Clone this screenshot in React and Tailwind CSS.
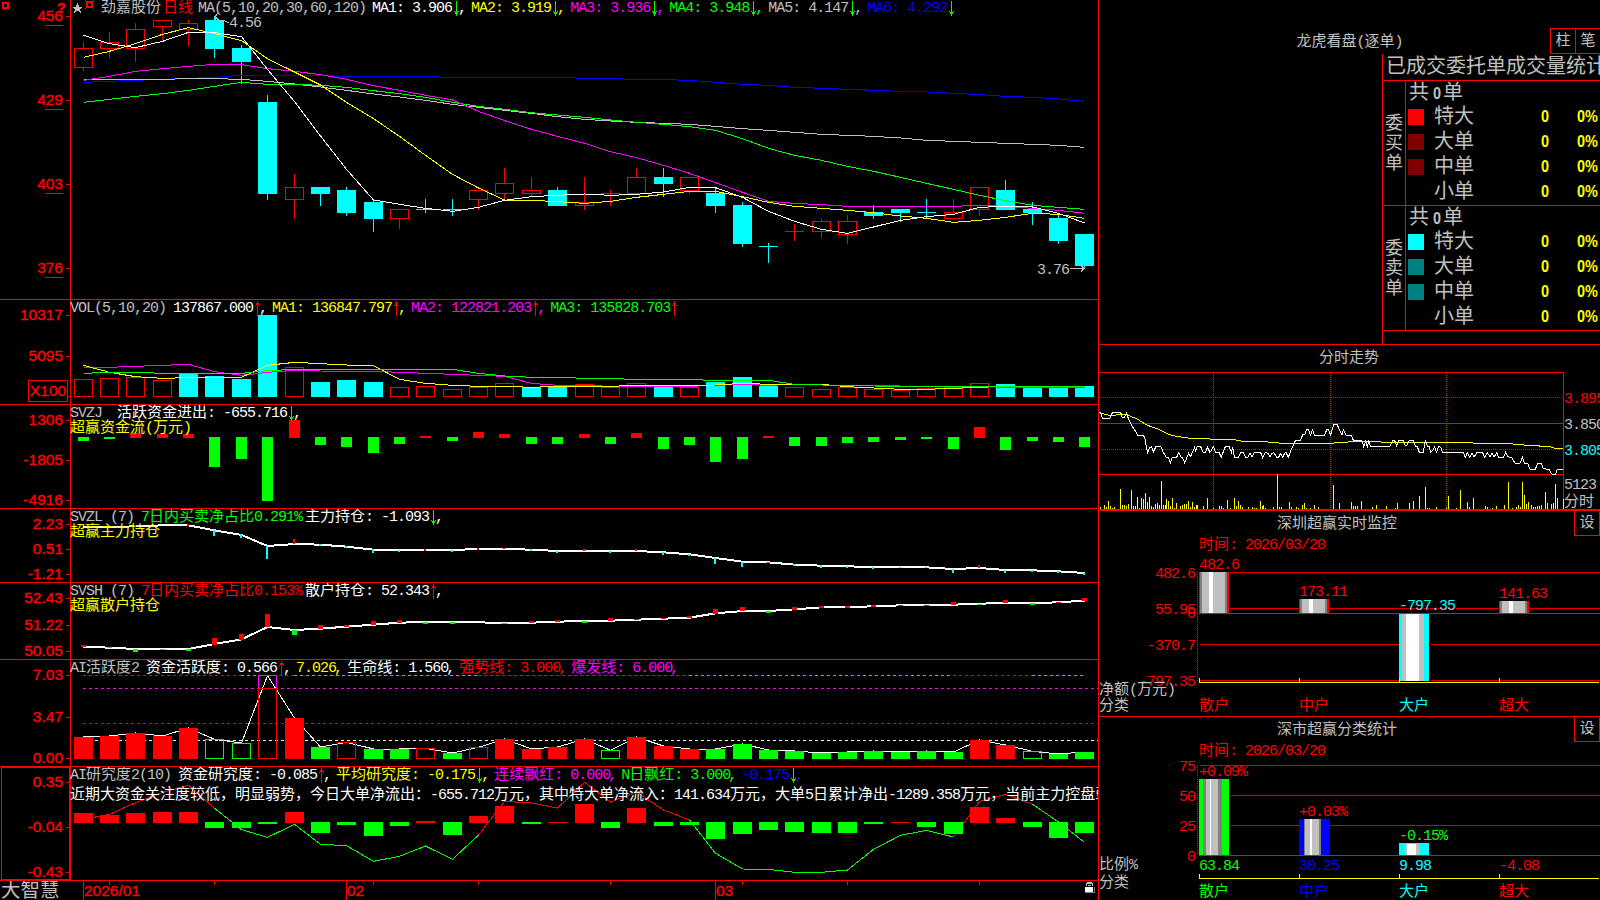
import React from 'react';

const RED = '#ff0000';
const GREEN = '#00ff00';
const CYAN = '#00ffff';
const YELLOW = '#ffff00';
const MAGENTA = '#ff00ff';
const BLUE = '#0000ff';
const WHITE = '#ffffff';
const GRAY = '#c0c0c0';
const DARK = '#808080';

const COUNT = 39;

// Centre pixel column of the bar with the given index
const barX = (i) => 83 + Math.floor(i * 26.36 + 0.19);

// Series are stored in thirds of a pixel below the panel's base
const px = (base, v) => base + Math.round(v / 3);

// [color, wick top, body top, body bottom, wick bottom]
const candles = [
  ['r', 42, 48, 67, 71], ['r', 32, 42, 48, 58], ['r', 23, 29, 48, 62], ['r', 20, 20, 26, 40],
  ['r', 20, 23, 29, 46], ['c', 16, 20, 49, 58], ['c', 45, 48, 62, 84], ['c', 95, 102, 194, 200],
  ['r', 174, 187, 199, 219], ['c', 187, 187, 194, 206], ['c', 187, 190, 213, 216], ['c', 200, 202, 219, 232],
  ['r', 209, 209, 218, 229], ['c', 199, 209, 209, 213], ['c', 199, 209, 209, 216], ['r', 190, 190, 199, 210],
  ['r', 168, 183, 193, 200], ['r', 177, 190, 193, 196], ['c', 187, 190, 206, 206], ['r', 177, 202, 205, 210],
  ['r', 190, 193, 193, 206], ['r', 168, 177, 193, 193], ['c', 168, 177, 184, 197], ['r', 177, 177, 190, 194],
  ['c', 187, 193, 206, 213], ['c', 202, 205, 244, 247], ['c', 243, 246, 246, 263], ['r', 224, 231, 231, 241],
  ['r', 218, 221, 231, 238], ['r', 215, 221, 234, 244], ['c', 205, 212, 216, 219], ['c', 209, 209, 213, 222],
  ['c', 199, 212, 212, 218], ['r', 199, 212, 218, 218], ['r', 187, 187, 209, 216], ['c', 180, 190, 210, 210],
  ['c', 202, 209, 213, 225], ['c', 215, 218, 241, 244], ['c', 234, 234, 266, 268],
];

const priceAverages = [
  { color: BLUE, data: [247, 244, 241, 238, 235, 232, 226, 226, 226, 227, 229, 229, 229, 230, 232, 232, 232, 232, 232, 235, 236, 238, 239, 241, 247, 253, 256, 262, 265, 268, 271, 274, 276, 280, 284, 289, 292, 297, 304] },
  { color: GRAY, data: [238, 238, 238, 238, 236, 236, 238, 244, 252, 261, 271, 282, 291, 301, 313, 322, 331, 340, 350, 358, 363, 367, 370, 373, 379, 386, 391, 397, 403, 406, 409, 414, 421, 424, 427, 430, 433, 436, 442] },
  { color: GREEN, data: [307, 298, 289, 281, 271, 259, 247, 253, 253, 256, 262, 272, 281, 292, 307, 319, 328, 338, 345, 352, 360, 367, 373, 380, 391, 416, 445, 466, 481, 499, 514, 532, 550, 568, 586, 602, 616, 622, 628] },
  { color: MAGENTA, data: [241, 229, 214, 206, 199, 193, 194, 206, 214, 224, 238, 257, 271, 286, 300, 334, 362, 388, 409, 430, 455, 473, 496, 520, 548, 577, 604, 610, 614, 619, 619, 619, 619, 619, 616, 619, 625, 631, 640] },
  { color: YELLOW, data: [172, 154, 131, 103, 83, 101, 122, 176, 216, 255, 307, 356, 409, 466, 523, 564, 600, 601, 605, 610, 604, 592, 583, 574, 574, 590, 607, 619, 625, 631, 638, 648, 655, 667, 661, 652, 640, 643, 655] },
  { color: WHITE, data: [106, 131, 143, 124, 97, 98, 110, 208, 305, 408, 508, 600, 613, 625, 634, 622, 601, 590, 586, 582, 586, 583, 576, 562, 563, 592, 634, 664, 688, 700, 681, 661, 650, 643, 622, 619, 621, 640, 669] },
];

const volumes = [268, 265, 262, 271, 250, 258, 267, 75, 232, 276, 270, 276, 292, 289, 298, 291, 280, 292, 290, 283, 291, 280, 289, 291, 276, 261, 288, 292, 298, 291, 298, 301, 295, 291, 280, 282, 292, 292, 288];
const volumeKinds = 'rrrrccccrcccrrrrrccrrrcrcccrrrrrrrrcccc';

const volumeAverages = [
  { color: MAGENTA, data: [232, 232, 229, 226, 223, 245, 256, 247, 241, 243, 244, 244, 247, 250, 253, 256, 259, 280, 286, 286, 289, 289, 289, 289, 286, 283, 286, 283, 285, 286, 286, 288, 289, 289, 289, 292, 292, 292, 292] },
  { color: YELLOW, data: [226, 247, 260, 265, 263, 262, 262, 226, 217, 221, 225, 227, 268, 280, 286, 289, 289, 292, 289, 289, 289, 286, 286, 286, 285, 280, 283, 283, 283, 290, 294, 298, 298, 295, 292, 289, 289, 289, 289] },
  { color: GREEN, data: [250, 247, 247, 250, 250, 250, 250, 242, 238, 238, 238, 238, 238, 238, 238, 250, 258, 262, 262, 265, 266, 268, 268, 269, 271, 271, 271, 283, 285, 286, 288, 289, 289, 289, 289, 289, 289, 289, 289] },
];

const flowBars = [453, 447, 429, 432, 432, 531, 507, 633, 390, 465, 471, 489, 462, 438, 453, 426, 432, 462, 462, 432, 462, 429, 477, 465, 516, 507, 438, 468, 468, 459, 456, 450, 447, 477, 411, 480, 453, 456, 471];

const mainHolding = [710, 711, 709, 706, 706, 721, 735, 768, 762, 764, 770, 779, 780, 780, 779, 778, 777, 779, 783, 783, 783, 783, 787, 793, 804, 815, 817, 824, 827, 829, 831, 831, 832, 837, 834, 840, 841, 844, 849];
const mainTicks = [
  [2, 'r', 706, 712], [4, 'r', 703, 709], [5, 'c', 720, 738], [6, 'c', 732, 744], [7, 'c', 768, 807], [8, 'r', 747, 762],
  [9, 'c', 761, 767], [10, 'c', 767, 773], [11, 'c', 777, 789], [12, 'c', 780, 786], [13, 'r', 777, 783], [14, 'c', 780, 786],
  [15, 'r', 774, 780], [16, 'r', 773, 777], [17, 'c', 777, 783], [18, 'c', 783, 789], [19, 'r', 777, 783], [20, 'c', 783, 789],
  [21, 'r', 777, 783], [22, 'c', 786, 795], [23, 'c', 791, 797], [24, 'c', 804, 822], [25, 'c', 816, 831], [26, 'r', 816, 819],
  [27, 'c', 822, 828], [28, 'c', 825, 834], [29, 'c', 828, 834], [30, 'c', 831, 837], [31, 'c', 831, 834], [32, 'c', 831, 834],
  [33, 'c', 837, 849], [34, 'r', 825, 834], [35, 'c', 840, 849], [36, 'c', 840, 846], [37, 'c', 843, 849], [38, 'c', 849, 855],
];

const retailHolding = [200, 203, 207, 208, 207, 192, 178, 141, 150, 146, 140, 134, 128, 126, 126, 127, 129, 128, 125, 123, 122, 119, 116, 113, 100, 93, 93, 88, 82, 81, 79, 76, 75, 74, 71, 69, 69, 67, 62];
const retailTicks = [
  [0, 'r', 195, 201], [1, 'g', 201, 204], [2, 'g', 207, 216], [3, 'g', 207, 210], [4, 'g', 207, 213], [5, 'r', 174, 195],
  [6, 'r', 162, 180], [7, 'r', 102, 141], [8, 'g', 150, 165], [9, 'r', 135, 147], [10, 'r', 135, 141], [11, 'r', 123, 135],
  [12, 'r', 120, 129], [13, 'g', 126, 132], [14, 'g', 126, 132], [16, 'g', 129, 132], [17, 'r', 123, 129], [18, 'r', 120, 126],
  [19, 'g', 123, 129], [20, 'r', 114, 123], [21, 'r', 117, 120], [22, 'r', 114, 117], [23, 'r', 108, 114], [24, 'r', 87, 102],
  [25, 'r', 81, 93], [26, 'g', 93, 99], [27, 'r', 81, 90], [28, 'r', 78, 84], [29, 'r', 78, 84], [30, 'r', 75, 81],
  [31, 'r', 75, 78], [32, 'r', 75, 78], [33, 'r', 66, 75], [34, 'g', 72, 75], [35, 'r', 60, 69], [36, 'g', 69, 75],
  [37, 'r', 66, 69], [38, 'r', 54, 63],
];

const activity = [471, 468, 459, 468, 444, 478, 489, 287, 414, 501, 487, 507, 507, 505, 519, 502, 477, 507, 501, 477, 511, 471, 498, 507, 507, 492, 510, 513, 519, 516, 513, 516, 513, 516, 480, 495, 514, 522, 516];
// Upper case is filled, lower case is hollow
const activityKinds = 'RRRRRggrRGrGGrGrRRRRgRRRGGGGGGGGGGRRgGG';

const researchBars = [699, 705, 699, 696, 696, 744, 744, 732, 696, 759, 735, 768, 738, 723, 765, 708, 678, 732, 726, 672, 744, 684, 738, 735, 777, 762, 750, 756, 759, 759, 732, 726, 741, 762, 681, 714, 741, 774, 759];
const researchLine = [718, 703, 668, 637, 616, 685, 749, 772, 733, 793, 797, 844, 829, 798, 838, 765, 664, 669, 684, 607, 666, 636, 690, 720, 820, 867, 868, 877, 877, 870, 808, 766, 751, 771, 664, 643, 673, 726, 787];

const intraday = '27,217 32,217 37,235 60,235 66,220 70,217 92,217 97,233 103,233 109,219 115,235 125,257 135,271 143,286 161,287 166,300 169,322 173,337 179,322 185,320 191,337 197,320 213,320 219,335 229,352 236,354 241,369 247,352 260,352 266,338 272,350 278,354 284,369 290,354 296,340 302,350 308,335 314,322 317,335 321,320 332,320 339,337 347,337 353,320 359,337 365,330 370,320 377,337 387,337 394,352 400,335 406,320 418,320 424,337 428,322 433,352 445,352 452,338 460,338 467,352 474,352 480,338 486,352 493,338 512,338 518,354 526,338 534,340 540,352 546,340 552,338 560,352 566,352 572,340 578,352 584,340 588,337 595,352 603,330 609,318 616,302 632,300 638,285 644,285 650,268 656,270 662,286 667,269 674,286 704,286 710,269 716,269 722,286 727,265 732,253 742,254 748,270 756,286 760,270 768,286 784,287 790,301 816,302 821,320 827,302 832,320 836,304 841,319 900,319 908,302 914,302 920,318 926,302 940,302 946,318 950,318 958,302 970,302 976,318 982,320 988,337 1000,337 1006,302 1012,318 1018,320 1022,337 1030,330 1034,320 1039,337 1046,320 1052,322 1058,337 1120,338 1126,352 1132,338 1139,352 1146,340 1152,352 1160,338 1178,338 1184,352 1192,338 1200,350 1206,338 1212,352 1220,338 1226,352 1240,352 1247,337 1254,350 1266,354 1275,370 1290,370 1297,352 1303,370 1314,372 1320,388 1336,388 1343,370 1354,370 1360,386 1378,388 1385,402 1396,403 1402,388 1420,388';
const intradayAverage = '27,217 45,223 65,227 90,223 110,223 125,231 140,236 165,252 185,261 205,267 235,283 260,289 300,295 350,296 370,298 430,298 450,303 525,305 560,309 720,310 760,307 800,304 855,304 880,307 1130,307 1160,310 1250,310 1300,315 1380,320 1395,325 1420,325';
const intradayVolume = [
  [31, 501], [43, 495], [49, 501], [55, 483], [61, 498], [67, 504], [73, 500], [91, 447], [97, 495], [103, 495], [109, 498],
  [115, 492], [124, 450], [130, 498], [136, 498], [142, 471], [148, 504], [154, 474], [160, 477], [166, 459], [172, 486],
  [178, 471], [184, 498], [190, 501], [196, 492], [202, 489], [208, 495], [214, 423], [220, 495], [226, 495], [229, 477],
  [235, 483], [241, 498], [247, 474], [253, 504], [259, 489], [271, 498], [277, 495], [283, 492], [289, 492], [295, 483],
  [301, 500], [307, 486], [313, 500], [319, 495], [322, 495], [340, 498], [352, 474], [370, 504], [388, 498], [394, 498],
  [400, 504], [412, 480], [421, 504], [433, 474], [439, 498], [445, 483], [451, 495], [457, 501], [475, 501], [487, 501],
  [493, 504], [499, 504], [511, 483], [517, 498], [520, 495], [526, 504], [550, 501], [562, 402], [568, 501], [574, 501],
  [598, 486], [604, 501], [619, 501], [625, 504], [637, 495], [643, 489], [649, 504], [661, 504], [673, 495], [685, 501],
  [730, 435], [748, 489], [784, 486], [790, 498], [796, 498], [802, 498], [814, 483], [847, 501], [859, 495], [889, 498],
  [916, 504], [922, 489], [958, 489], [970, 483], [988, 468], [1006, 441], [1012, 504], [1018, 504], [1039, 501], [1069, 504],
  [1075, 468], [1099, 504], [1111, 450], [1132, 486], [1138, 500], [1150, 474], [1186, 498], [1192, 500], [1207, 504],
  [1219, 498], [1243, 495], [1255, 426], [1267, 504], [1279, 501], [1285, 495], [1291, 501], [1297, 426], [1303, 465],
  [1309, 492], [1315, 486], [1324, 495], [1330, 501], [1336, 501], [1342, 498], [1348, 498], [1354, 495], [1366, 456],
  [1372, 489], [1384, 492], [1390, 489], [1396, 432], [1402, 474], [1420, 477],
];

const kindColor = { r: RED, c: CYAN, g: GREEN };

// Chinese glyphs are 15px wide and latin ones 8px, so the latin runs are tightened
const Mixed = ({ text, tag: Tag = 'span' }) =>
  text.split(/([\u2e80-\uffef]+)/).filter(Boolean).map((part, i) => (
    <Tag key={i} className={/[\u2e80-\uffef]/.test(part) ? 'tracking-normal' : 'tracking-[-1px]'}>
      {part}
    </Tag>
  ));

const Label = ({ x, y, color = RED, anchor = 'start', children }) => (
  <text x={x} y={y + 5} fill={color} textAnchor={anchor} className="text-[15px] whitespace-pre">
    <Mixed text={children} tag="tspan" />
  </text>
);

const HLine = ({ x1, x2, y, color = RED, dash }) => (
  <line x1={x1} x2={x2} y1={y + 0.5} y2={y + 0.5} stroke={color} strokeDasharray={dash} />
);

const VLine = ({ x, y1, y2, color = RED, dash }) => (
  <line x1={x + 0.5} x2={x + 0.5} y1={y1} y2={y2} stroke={color} strokeDasharray={dash} />
);

const Series = ({ data, base, color, from = 0, to = COUNT - 1, width = 1 }) => (
  <polyline
    fill="none"
    stroke={color}
    strokeWidth={width}
    points={data
      .slice(from, to + 1)
      .map((v, i) => `${barX(from + i) + 0.5},${base + v / 3}`)
      .join(' ')}
  />
);

const Bar = ({ i, top, bottom, color, hollow, width = 19 }) => {
  const x = barX(i) - (width - 1) / 2;
  if (hollow) {
    return (
      <rect x={x + 0.5} y={top + 0.5} width={width - 1} height={Math.max(bottom - top - 1, 1)} fill="none" stroke={color} />
    );
  }
  return <rect x={x} y={top} width={width} height={Math.max(bottom - top, 1)} fill={color} />;
};

const Arrow = ({ up }) => (
  <svg width="8" height="15" viewBox="0 0 8 15" shapeRendering="crispEdges" className="-mt-px shrink-0">
    {up ? (
      <path d="M4 0h1v15H4zM3 2h3v2H3zM2 4h1v1H2zM6 4h1v1H6z" fill={RED} />
    ) : (
      <path d="M4 0h1v15H4zM3 11h3v2H3zM2 10h1v1H2zM6 10h1v1H6z" fill={GREEN} />
    )}
  </svg>
);

// One reading of an indicator header: text, trend arrow, comma
const Reading = ({ color, text, arrow, comma = true }) => (
  <span className="flex items-center whitespace-pre" style={{ color }}>
    <span><Mixed text={text} /></span>
    {arrow && <Arrow up={arrow === 'up'} />}
    {comma && <span className="-ml-[2px] mr-[2px] tracking-[-1px]">,</span>}
  </span>
);

const Header = ({ title, subtitle, children }) => (
  <div className="absolute left-[70px] top-px text-[15px] leading-[16px] whitespace-nowrap">
    <div className="flex h-4 items-center">
      <span className="whitespace-pre text-[#c0c0c0]"><Mixed text={title} /></span>
      <div className="flex gap-[3px] pl-[7px]">{children}</div>
    </div>
    {subtitle && <div className="-mt-px text-[#ffff00]"><Mixed text={subtitle} /></div>}
  </div>
);

const Axis = ({ marks, underline }) => (
  <g>
    {marks.map(([text, y]) => (
      <g key={text}>
        <text x="63" y={y + 5} fill={RED} stroke={RED} strokeWidth="0.4" textAnchor="end" className="font-[Liberation_Sans] text-[15.5px]">
          {text}
        </text>
        <HLine x1={66} x2={70} y={y} />
        {underline && <HLine x1={45} x2={63} y={y + 9} />}
      </g>
    ))}
  </g>
);

const Panel = ({ top, height, marks, underline, header, children }) => (
  <section className="relative w-[1098px] shrink-0 overflow-hidden">
    <svg width="1098" height={height} viewBox={`0 ${top} 1098 ${height}`} shapeRendering="crispEdges" className="block">
      <VLine x={70} y1={top} y2={top + height} />
      <Axis marks={marks} underline={underline} />
      {children}
      <HLine x1={0} x2={1098} y={top + height - 1} />
    </svg>
    {header}
  </section>
);

const Gear = ({ x, y }) => (
  <g transform={`translate(${x} ${y})`} fill={RED}>
    <path d="M1 1h7v7H1zM3 3v3h3V3z" fillRule="evenodd" />
    <path d="M0 0h1v1H0zM8 0h1v1H8zM0 8h1v1H0zM8 8h1v1H8z" />
  </g>
);

const PricePanel = () => (
  <Panel
    top={0}
    height={300}
    underline
    marks={[['456', 16], ['429', 100], ['403', 184], ['376', 268]]}
    header={
      <div className="absolute left-[101px] top-px flex h-4 items-center text-[15px] leading-[16px] whitespace-nowrap">
        <span className="text-[#c0c0c0]">劲嘉股份</span>
        <span className="pl-[2px] text-[#ff0000]">日线</span>
        <span className="pl-[5px] text-[#c0c0c0]"><Mixed text="MA(5,10,20,30,60,120)" /></span>
        <div className="flex gap-[3px] pl-[6px]">
          <Reading color={WHITE} text="MA1: 3.906" arrow="down" />
          <Reading color={YELLOW} text="MA2: 3.919" arrow="down" />
          <Reading color={MAGENTA} text="MA3: 3.936" arrow="down" />
          <Reading color={GREEN} text="MA4: 3.948" arrow="down" />
          <Reading color={GRAY} text="MA5: 4.147" arrow="down" />
          <Reading color={BLUE} text="MA6: 4.292" arrow="down" comma={false} />
        </div>
      </div>
    }
  >
    <path d="M2 2h7v7H2zM4 4v3h3V4z" fillRule="evenodd" fill={RED} />
    <path d="M9 9h1v1H9zM4 9h1v1H4z" fill={RED} />
    <Gear x={85} y={0} />
    <path d="M77.500 3l1.500 3.500h4l-3 2.500 1 4-3.500-2.300-3.500 2.300 1-4-3-2.500h4z" fill={GRAY} />
    <text x="57" y="13" fill={RED} stroke={RED} strokeWidth="0.6" className="font-[Liberation_Sans] text-[14px] font-bold">?</text>
    {candles.map(([kind, high, top, bottom, low], i) => {
      const color = kindColor[kind];
      return (
        <g key={i}>
          <VLine x={barX(i)} y1={high} y2={top} color={color} />
          <VLine x={barX(i)} y1={bottom} y2={low} color={color} />
          {top === bottom ? (
            <HLine x1={barX(i) - 9} x2={barX(i) + 10} y={top} color={color} />
          ) : (
            <Bar i={i} top={top} bottom={kind === 'r' ? bottom + 1 : bottom} color={color} hollow={kind === 'r'} />
          )}
        </g>
      );
    })}
    {priceAverages.map(({ color, data }) => (
      <Series key={color} data={data} base={0} color={color} />
    ))}
    <path d="M215 17l4 3 6 1 4 2M215 17l3-4M215 17l1 3" fill="none" stroke={GRAY} />
    <Label x={229} y={22} color={GRAY}>4.56</Label>
    <Label x={1037} y={269} color={GRAY}>3.76</Label>
    <path d="M1070 268.500h14M1081 265.500l3 3-3 3" fill="none" stroke={GRAY} />
  </Panel>
);

const VolumePanel = () => (
  <Panel
    top={300}
    height={105}
    marks={[['10317', 315], ['5095', 356]]}
    header={
      <Header title="VOL(5,10,20)">
        <Reading color={WHITE} text="137867.000" arrow="up" />
        <Reading color={YELLOW} text="MA1: 136847.797" arrow="up" />
        <Reading color={MAGENTA} text="MA2: 122821.203" arrow="up" />
        <Reading color={GREEN} text="MA3: 135828.703" arrow="up" comma={false} />
      </Header>
    }
  >
    <rect x="28.500" y="380.500" width="39" height="21" fill="none" stroke={RED} />
    <text x="30" y="396" fill={RED} stroke={RED} strokeWidth="0.4" className="font-[Liberation_Sans] text-[15.5px]">X100</text>
    <HLine x1={67} x2={70} y={396} />
    {volumes.map((v, i) => (
      <Bar key={i} i={i} top={px(290, v - 1)} bottom={397} color={kindColor[volumeKinds[i]]} hollow={volumeKinds[i] === 'r'} />
    ))}
    {volumeAverages.map(({ color, data }) => (
      <Series key={color} data={data} base={290} color={color} />
    ))}
  </Panel>
);

const FlowPanel = () => (
  <Panel
    top={405}
    height={104}
    marks={[['1306', 420], ['-1805', 460], ['-4916', 500]]}
    header={
      <Header title="SVZJ " subtitle="超赢资金流(万元)">
        <Reading color={WHITE} text="活跃资金进出: -655.716" arrow="down" />
      </Header>
    }
  >
    {flowBars.map((v, i) => (
      v < 441
        ? <Bar key={i} i={i} top={px(290, v)} bottom={438} color={RED} width={11} />
        : <Bar key={i} i={i} top={437} bottom={px(290, v)} color={GREEN} width={11} />
    ))}
  </Panel>
);

const MainHoldingPanel = () => (
  <Panel
    top={509}
    height={74}
    marks={[['2.23', 524], ['0.51', 549], ['-1.21', 574]]}
    header={
      <Header title="SVZL (7)" subtitle="超赢主力持仓">
        <Reading color={GREEN} text="7日内买卖净占比0.291%" comma={false} />
        <Reading color={WHITE} text="主力持仓: -1.093" arrow="down" />
      </Header>
    }
  >
    <Series data={mainHolding} base={290} color={WHITE} width={2} />
    {mainTicks.map(([i, kind, y1, y2]) => (
      <rect key={i} x={barX(i) - 1} y={px(290, y1)} width="2" height={(y2 - y1) / 3} fill={kindColor[kind]} />
    ))}
  </Panel>
);

const RetailHoldingPanel = () => (
  <Panel
    top={583}
    height={77}
    marks={[['52.43', 598], ['51.22', 625], ['50.05', 651]]}
    header={
      <Header title="SVSH (7)" subtitle="超赢散户持仓">
        <Reading color={RED} text="7日内买卖净占比0.153%" comma={false} />
        <Reading color={WHITE} text="散户持仓: 52.343" arrow="up" />
      </Header>
    }
  >
    <Series data={retailHolding} base={580} color={WHITE} width={2} />
    {retailTicks.map(([i, kind, y1, y2]) => (
      <rect key={i} x={barX(i) - 2} y={px(580, y1)} width="5" height={(y2 - y1) / 3} fill={kindColor[kind]} />
    ))}
  </Panel>
);

const ActivityPanel = () => (
  <Panel
    top={660}
    height={107}
    marks={[['7.03', 675], ['3.47', 717], ['0.00', 758]]}
    header={
      <Header title="AI活跃度2">
        <Reading color={WHITE} text="资金活跃度: 0.566" arrow="up" />
        <Reading color={YELLOW} text="7.026" />
        <Reading color={WHITE} text="生命线: 1.560" />
        <Reading color={RED} text="强势线: 3.000" />
        <Reading color={MAGENTA} text="爆发线: 6.000" />
      </Header>
    }
  >
    {[[0, 6, RED], [6, 7, GREEN], [7, 8, RED], [8, 15, GREEN], [15, 23, RED], [23, 33, GREEN], [33, 36, RED], [36, 38, GREEN]].map(([from, to, color]) => (
      <HLine key={from} x1={barX(from)} x2={barX(to)} y={675} color={color} dash="3 3" />
    ))}
    <HLine x1={83} x2={1098} y={688} color={MAGENTA} dash="3 3" />
    <HLine x1={83} x2={1098} y={723} dash="3 3" />
    <HLine x1={83} x2={1098} y={740} color={WHITE} dash="3 3" />
    <Series data={activity} base={580} color={WHITE} />
    {activity.map((v, i) => {
      const kind = activityKinds[i];
      const color = kindColor[kind.toLowerCase()];
      const top = i === 7 ? 688 : px(580, v - 1);
      return <Bar key={i} i={i} top={top} bottom={759} color={color} hollow={kind === kind.toLowerCase()} />;
    })}
    <path d="M258.500 688V675.500h18V688" fill="none" stroke={MAGENTA} />
  </Panel>
);

const ResearchPanel = () => (
  <Panel
    top={767}
    height={114}
    marks={[['0.35', 782], ['-0.04', 827], ['-0.43', 872]]}
    header={
      <>
        <Header title="AI研究度2(10)">
          <Reading color={WHITE} text="资金研究度: -0.085" arrow="up" />
          <Reading color={YELLOW} text="平均研究度: -0.175" arrow="down" />
          <Reading color={MAGENTA} text="连续飘红: 0.000" />
          <Reading color={GREEN} text="N日飘红: 3.000" />
          <Reading color={BLUE} text="-0.175" arrow="down" />
        </Header>
        <p className="absolute left-[70px] top-[21px] text-[15px] leading-[16px] whitespace-nowrap text-white">
          <Mixed text="近期大资金关注度较低，明显弱势，今日大单净流出：-655.712万元，其中特大单净流入：141.634万元，大单5日累计净出-1289.358万元，当前主力控盘弱" />
        </p>
      </>
    }
  >
    <rect x="1.500" y="767.500" width="68" height="112" fill="none" stroke={RED} />
    {[[0, 5, RED], [5, 15, GREEN], [15, 23, RED], [23, 33, GREEN], [33, 36, RED], [36, 38, GREEN]].map(([from, to, color]) => (
      <Series key={from} data={researchLine} base={580} color={color} from={from} to={to} />
    ))}
    {researchBars.map((v, i) => (
      v <= 726
        ? <Bar key={i} i={i} top={px(580, v)} bottom={823} color={RED} />
        : <Bar key={i} i={i} top={822} bottom={px(580, v)} color={GREEN} />
    ))}
  </Panel>
);

const DateAxis = () => (
  <footer className="relative h-[19px] w-[1098px]">
    <svg width="1098" height="19" viewBox="0 881 1098 19" shapeRendering="crispEdges" className="block">
      {[[0, '2026/01'], [10, '02'], [24, '03']].map(([i, text]) => (
        <g key={text}>
          <VLine x={barX(i)} y1={881} y2={900} />
          <text x={barX(i) + 1} y="896" fill={RED} stroke={RED} strokeWidth="0.4" className="font-[Liberation_Sans] text-[15.5px]">{text}</text>
        </g>
      ))}
      {[1, 5, 11, 15, 20, 25, 29, 34].map((i) => <VLine key={i} x={barX(i)} y1={881} y2={885} />)}
      <text x="1" y="897" fill={GRAY} className="text-[19.5px]">大智慧</text>
      <path d="M1087 882h5v1h1v3h-1v-2h-5v2h-1v-3h1zM1088 885h3v1h-3z" fill={GRAY} />
      <path d="M1085 887h8v5h-8z" fill={WHITE} />
      <path d="M1094 887h1v6h-10v-1h9z" fill={DARK} />
    </svg>
  </footer>
);

const orderGroups = [
  { side: ['委', '买', '单'], rows: [['特大', 'bg-[#ff0000]'], ['大单', 'bg-[#800000]'], ['中单', 'bg-[#800000]'], ['小单', '']] },
  { side: ['委', '卖', '单'], rows: [['特大', 'bg-[#00ffff]'], ['大单', 'bg-[#008080]'], ['中单', 'bg-[#008080]'], ['小单', '']] },
];

const Figure = ({ children }) => (
  <span className="inline-block origin-left scale-x-85 font-[Liberation_Sans] text-[17px] font-bold">{children}</span>
);

const OrderStats = () => (
  <section className="flex h-[345px] flex-col border-b border-[#ff0000]">
    <header className="relative flex h-[54px] shrink-0 justify-center pt-[35px] text-[15px] leading-[16px]">
      <span><Mixed text="龙虎看盘(逐单)" /></span>
      <div className="absolute right-0 top-[28px] flex h-[26px] border-y border-[#ff0000]">
        <span className="w-[25px] border-l border-[#ff0000] text-center leading-[25px]">柱</span>
        <span className="w-[25px] border-l border-[#ff0000] text-center leading-[25px]">笔</span>
      </div>
    </header>
    <div className="ml-[283px] flex-1 overflow-hidden border-l border-[#ff0000]">
      <h2 className="h-[26px] pl-[3px] pt-[2px] text-[20px] leading-[24px] whitespace-nowrap">已成交委托单成交量统计</h2>
      <div className="ml-px border-b border-[#ff0000]">
        {orderGroups.map(({ side, rows }) => (
          <div key={side[1]} className="flex h-[125px] border-t border-[#ff0000]">
            <div className="flex w-[21px] shrink-0 flex-col pl-px pt-[33px] text-[18px] leading-[20px]">
              {side.map((char) => <span key={char}>{char}</span>)}
            </div>
            <div className="min-w-0 flex-1 border-l border-[#ff0000] text-[20px] leading-[24px]">
              <div className="flex h-[25px] pl-[3px] pt-px">
                共<span className="w-[14px] pl-[4px]"><Figure>0</Figure></span>单
              </div>
              {rows.map(([name, swatch]) => (
                <div key={name} className="-mt-px mb-px flex h-[25px] items-center pl-[2px]">
                  <span className={`-mt-[2px] size-4 shrink-0 ${swatch}`} />
                  <span className="w-[117px] shrink-0 pl-[10px]">{name}</span>
                  <span className="-mt-[2px] w-[36px] shrink-0 text-[#ffff00]"><Figure>0</Figure></span>
                  <span className="-mt-[2px] text-[#ffff00]"><Figure>0%</Figure></span>
                </div>
              ))}
            </div>
          </div>
        ))}
      </div>
    </div>
  </section>
);

const Intraday = () => (
  <section className="h-[166px]">
    <svg width="501" height="166" viewBox="1099 345 501 166" shapeRendering="crispEdges" className="block">
      <Label x={1349} y={357} color={GRAY} anchor="middle">分时走势</Label>
      <HLine x1={1099} x2={1563} y={372} />
      <HLine x1={1099} x2={1563} y={397} dash="1 1" />
      <HLine x1={1099} x2={1563} y={423} />
      <HLine x1={1099} x2={1563} y={449} dash="1 1" />
      <HLine x1={1099} x2={1563} y={474} />
      <VLine x={1563} y1={372} y2={509} />
      <VLine x={1213} y1={373} y2={509} dash="1 1" />
      <VLine x={1330} y1={373} y2={509} dash="1 1" />
      <VLine x={1446} y1={373} y2={509} dash="1 1" />
      {intradayVolume.map(([x, top]) => (
        <VLine key={x} x={1090 + Math.floor(x / 3)} y1={px(340, top)} y2={509} color={YELLOW} />
      ))}
      <g transform="translate(1090 340) scale(0.33333)" fill="none">
        <polyline points={intradayAverage} stroke={YELLOW} vectorEffect="non-scaling-stroke" />
        <polyline points={intraday} stroke={WHITE} vectorEffect="non-scaling-stroke" />
      </g>
      <rect x="1099" y="509" width="501" height="2" fill={RED} />
      <Label x={1564} y={398}>3.895</Label>
      <Label x={1564} y={424} color={GRAY}>3.850</Label>
      <Label x={1564} y={450} color={CYAN}>3.805</Label>
      <Label x={1564} y={484} color={GRAY}>5123</Label>
      <Label x={1564} y={501} color={GRAY}>分时</Label>
    </svg>
  </section>
);

// stripes: [offset, width, color] inside a 30px column
const Column = ({ x, top, bottom, stripes }) => (
  <g>
    {stripes.map(([dx, width, color]) => (
      <rect key={dx} x={x + dx} y={top} width={width} height={bottom - top} fill={color} />
    ))}
  </g>
);

const redColumn = [[0, 1, RED], [1, 2, DARK], [3, 7, GRAY], [10, 4, WHITE], [14, 12, GRAY], [26, 2, DARK], [28, 2, RED]];

const SectionTitle = ({ children }) => (
  <header className="absolute inset-x-0 top-0 text-[15px] leading-[16px]">
    <h2 className="pl-[178px] pt-[6px]">{children}</h2>
    <button className="absolute right-0 top-0 h-[25px] w-[26px] border-x border-b border-[#ff0000] text-center leading-[25px]">设</button>
  </header>
);

const TimeAxis = ({ y, names, colors, labelY }) => (
  <g>
    <HLine x1={1199} x2={1599} y={y} color={YELLOW} />
    {names.map((name, i) => (
      <g key={name}>
        <VLine x={1199 + i * 100} y1={y - 4} y2={y} color={YELLOW} />
        <Label x={1199 + i * 100} y={labelY} color={colors[i]}>{name}</Label>
      </g>
    ))}
  </g>
);

const categories = ['散户', '中户', '大户', '超大'];

const Monitor = () => (
  <section className="relative h-[206px] border-b border-[#ff0000]">
    <SectionTitle>深圳超赢实时监控</SectionTitle>
    <svg width="501" height="205" viewBox="1099 511 501 205" shapeRendering="crispEdges" className="block">
      <Label x={1199} y={543.5}>时间: 2026/03/20</Label>
      {[['482.6', 573], ['55.95', 609], ['-370.7', 645], ['-797.35', 681]].map(([text, y]) => (
        <g key={text}>
          <Label x={1195} y={y} anchor="end">{text}</Label>
          <HLine x1={1200} x2={1600} y={y - 1} dash="1 1" />
        </g>
      ))}
      <Label x={1195} y={613} anchor="end">0</Label>
      <VLine x={1197} y1={572} y2={681} dash="1 1" />
      <Column x={1199} top={572} bottom={613} stripes={redColumn} />
      <Column x={1299} top={599} bottom={613} stripes={redColumn} />
      <Column x={1399} top={614} bottom={681} stripes={[[0, 3, CYAN], [3, 4, GRAY], [7, 13, WHITE], [20, 5, GRAY], [25, 5, CYAN]]} />
      <Column x={1499} top={601} bottom={613} stripes={redColumn} />
      <HLine x1={1199} x2={1600} y={613} />
      <Label x={1199} y={564}>482.6</Label>
      <Label x={1299} y={591}>173.11</Label>
      <Label x={1399} y={605} color={CYAN}>-797.35</Label>
      <Label x={1499} y={593}>141.63</Label>
      <TimeAxis y={682} labelY={705} names={categories} colors={[RED, RED, CYAN, RED]} />
      <Label x={1099} y={689} color={GRAY}>净额(万元)</Label>
      <Label x={1099} y={705} color={GRAY}>分类</Label>
    </svg>
  </section>
);

const Distribution = () => (
  <section className="relative h-[183px]">
    <SectionTitle>深市超赢分类统计</SectionTitle>
    <svg width="501" height="183" viewBox="1099 717 501 183" shapeRendering="crispEdges" className="block">
      <Label x={1199} y={749.5}>时间: 2026/03/20</Label>
      {[['75', 766], ['50', 796], ['25', 826]].map(([text, y]) => (
        <g key={text}>
          <Label x={1195} y={y} anchor="end">{text}</Label>
          <HLine x1={1200} x2={1600} y={y - 1} dash="1 1" />
        </g>
      ))}
      <Label x={1195} y={856} anchor="end">0</Label>
      <VLine x={1197} y1={765} y2={855} dash="1 1" />
      <Column x={1199} top={779} bottom={855} stripes={[[0, 4, GREEN], [4, 3, DARK], [7, 4, GRAY], [11, 1, WHITE], [12, 7, GRAY], [19, 4, DARK], [23, 7, GREEN]]} />
      <Column x={1299} top={819} bottom={855} stripes={[[0, 5, BLUE], [5, 1, DARK], [6, 5, GRAY], [11, 2, WHITE], [13, 7, GRAY], [20, 2, DARK], [22, 8, BLUE]]} />
      <Column x={1399} top={843} bottom={855} stripes={[[0, 30, CYAN]]} />
      <Column x={1405} top={844} bottom={855} stripes={[[0, 2, GRAY], [2, 9, WHITE], [11, 3, GRAY]]} />
      <HLine x1={1199} x2={1600} y={855} />
      <Label x={1199} y={771}>+0.09%</Label>
      <Label x={1299} y={811}>+0.03%</Label>
      <Label x={1399} y={835} color={GREEN}>-0.15%</Label>
      <Label x={1199} y={865} color={GREEN}>63.84</Label>
      <Label x={1299} y={865} color={BLUE}>30.25</Label>
      <Label x={1399} y={865} color={CYAN}>9.98</Label>
      <Label x={1499} y={865}>-4.08</Label>
      <TimeAxis y={878} labelY={891} names={categories} colors={[GREEN, BLUE, CYAN, RED]} />
      <Label x={1099} y={864} color={GRAY}>比例%</Label>
      <Label x={1099} y={882} color={GRAY}>分类</Label>
    </svg>
  </section>
);

const App = () => (
  <div className="flex h-[900px] w-[1600px] overflow-hidden bg-black font-['Liberation_Mono','Noto_Sans_CJK_SC',monospace] text-[#c0c0c0]">
    <main className="flex w-[1099px] shrink-0 flex-col border-r border-[#ff0000]">
      <PricePanel />
      <VolumePanel />
      <FlowPanel />
      <MainHoldingPanel />
      <RetailHoldingPanel />
      <ActivityPanel />
      <ResearchPanel />
      <DateAxis />
    </main>
    <aside className="flex w-[501px] shrink-0 flex-col">
      <OrderStats />
      <Intraday />
      <Monitor />
      <Distribution />
    </aside>
  </div>
);

export default App;
